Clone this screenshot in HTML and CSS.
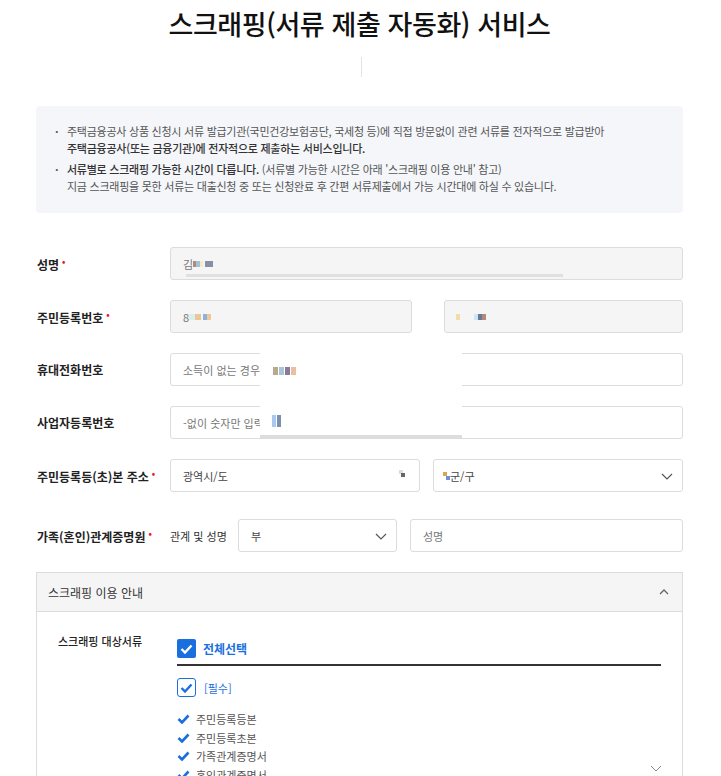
FILE: index.html
```html
<!DOCTYPE html>
<html lang="ko">
<head>
<meta charset="utf-8">
<title>스크래핑(서류 제출 자동화) 서비스</title>
<link rel="stylesheet" href="styles.css">
</head>
<body>
<div class="page">
  <h1 class="title">스크래핑(서류 제출 자동화) 서비스</h1>
  <div class="divider"></div>

  <div class="info">
    <ul class="info-list">
      <li>주택금융공사 상품 신청시 서류 발급기관(국민건강보험공단, 국세청 등)에 직접 방문없이 관련 서류를 전자적으로 발급받아<br><b>주택금융공사(또는 금융기관)에 전자적으로 제출하는 서비스입니다.</b></li>
      <li><b>서류별로 스크래핑 가능한 시간이 다릅니다.</b> (서류별 가능한 시간은 아래 '스크래핑 이용 안내' 참고)<br>지금 스크래핑을 못한 서류는 대출신청 중 또는 신청완료 후 간편 서류제출에서 가능 시간대에 하실 수 있습니다.</li>
    </ul>
  </div>

  <div class="form">
    <div class="row">
      <div class="label">성명<span class="req">•</span></div>
      <div class="field">
        <div class="input readonly">김<span class="px px-a"></span><span class="px px-b"></span></div>
      </div>
    </div>
    <div class="row">
      <div class="label">주민등록번호<span class="req">•</span></div>
      <div class="field two">
        <div class="input readonly rrn1">8<span class="px px-c"></span><span class="px px-d"></span></div>
        <div class="input readonly rrn2"><span class="px px-e"></span><span class="px px-f"></span></div>
      </div>
    </div>
    <div class="row">
      <div class="label">휴대전화번호</div>
      <div class="field">
        <div class="input placeholder">소득이 없는 경우 입력</div>
      </div>
    </div>
    <div class="row">
      <div class="label">사업자등록번호</div>
      <div class="field">
        <div class="input placeholder">-없이 숫자만 입력하세요</div>
      </div>
    </div>
    <div class="row">
      <div class="label">주민등록등(초)본 주소<span class="req">•</span></div>
      <div class="field two addr">
        <div class="input select">광역시/도<span class="px px-g"></span></div>
        <div class="input select"><span class="px px-h"></span>군/구
          <svg class="chev" width="12" height="7" viewBox="0 0 12 7"><polyline points="1,1 6,6 11,1" fill="none" stroke="#555" stroke-width="1.2"/></svg>
        </div>
      </div>
    </div>
    <div class="row row-family">
      <div class="label">가족(혼인)관계증명원<span class="req">•</span></div>
      <div class="field family">
        <span class="sublabel">관계 및 성명</span>
        <div class="input select rel">부
          <svg class="chev" width="12" height="7" viewBox="0 0 12 7"><polyline points="1,1 6,6 11,1" fill="none" stroke="#555" stroke-width="1.2"/></svg>
        </div>
        <div class="input placeholder fname">성명</div>
      </div>
    </div>

    <div class="mask mask-phone"></div>
    <div class="mask-blocks mb-phone"><span></span><span></span><span></span><span></span></div>
    <div class="mask-blocks mb-biz"><span></span><span></span></div>
  </div>

  <div class="accordion">
    <div class="acc-head">
      <span>스크래핑 이용 안내</span>
      <svg class="caret" width="10" height="6" viewBox="0 0 10 6"><polyline points="1,5 5,1 9,5" fill="none" stroke="#666" stroke-width="1.3"/></svg>
    </div>
    <div class="acc-body">
      <div class="acc-label">스크래핑 대상서류</div>
      <div class="docs">
        <div class="check-all">
          <span class="cb cb-filled"><svg width="13" height="10" viewBox="0 0 13 10"><polyline points="1.5,5 5,8.5 11.5,1.5" fill="none" stroke="#fff" stroke-width="2.4"/></svg></span>
          <span class="all-text">전체선택</span>
        </div>
        <div class="check-req">
          <span class="cb cb-outline"><svg width="13" height="10" viewBox="0 0 13 10"><polyline points="1.5,5 5,8.5 11.5,1.5" fill="none" stroke="#1a6fdf" stroke-width="2.4"/></svg></span>
          <span class="req-text">[필수]</span>
        </div>
        <ul class="doc-list">
          <li><svg width="13" height="10" viewBox="0 0 13 10"><polyline points="1.5,5 5,8.5 11.5,1.5" fill="none" stroke="#1a6fdf" stroke-width="2.6"/></svg>주민등록등본</li>
          <li><svg width="13" height="10" viewBox="0 0 13 10"><polyline points="1.5,5 5,8.5 11.5,1.5" fill="none" stroke="#1a6fdf" stroke-width="2.6"/></svg>주민등록초본</li>
          <li><svg width="13" height="10" viewBox="0 0 13 10"><polyline points="1.5,5 5,8.5 11.5,1.5" fill="none" stroke="#1a6fdf" stroke-width="2.6"/></svg>가족관계증명서</li>
          <li><svg width="13" height="10" viewBox="0 0 13 10"><polyline points="1.5,5 5,8.5 11.5,1.5" fill="none" stroke="#1a6fdf" stroke-width="2.6"/></svg>혼인관계증명서</li>
        </ul>
      </div>
      <svg class="more" width="12" height="7" viewBox="0 0 12 7"><polyline points="1,1 6,6 11,1" fill="none" stroke="#888" stroke-width="1"/></svg>
    </div>
  </div>
</div>
</body>
</html>
```

FILE: styles.css
```css
* { box-sizing: border-box; }
html, body { margin: 0; padding: 0; background: #fff; }
body {
  font-family: "Noto Sans CJK KR", "Noto Sans", sans-serif;
  color: #222;
  width: 721px;
  height: 776px;
  overflow: hidden;
}
.page { padding: 0 38px 0 36px; }

.title {
  margin: 0;
  padding-top: 4px;
  height: 44px;
  line-height: 40px;
  font-size: 27px;
  font-weight: 500;
  text-align: center;
  color: #111;
  letter-spacing: -0.4px;
}
.divider {
  width: 1px;
  height: 20px;
  background: #e3e3e3;
  margin: 13px 0 0 325px;
}

.info {
  margin-top: 29px;
  background: #f4f6fa;
  border-radius: 4px;
  padding: 17px 10px 18px 17px;
}
.info-list { margin: 0; padding: 0; list-style: none; }
.info-list li {
  position: relative;
  padding-left: 14px;
  font-size: 11px;
  line-height: 17px;
  color: #555;
  letter-spacing: -0.25px;
}
.info-list li + li { margin-top: 4px; }
.info-list li::before {
  content: "·";
  position: absolute;
  left: 2px;
  top: 0;
  color: #555;
  font-weight: 700;
}
.info-list b { font-weight: 500; color: #333; }

.form { position: relative; margin-top: 34px; }
.row { display: flex; align-items: center; height: 33px; }
.row + .row { margin-top: 20px; }
.row.row-family { margin-top: 27px; }
.label {
  width: 134px;
  flex: none;
  font-size: 12px;
  font-weight: 700;
  color: #222;
  padding-left: 1px;
  white-space: nowrap;
}
.req {
  color: #e8141c;
  font-size: 9px;
  vertical-align: 5px;
  margin-left: 3px;
}
.field { flex: 1; display: flex; align-items: center; height: 33px; }
.input {
  position: relative;
  height: 33px;
  border: 1px solid #dcdcdc;
  border-radius: 3px;
  background: #fff;
  font-size: 11px;
  color: #444;
  padding-left: 12px;
  display: flex;
  align-items: center;
  flex: 1;
}
.input.readonly { background: #f5f5f5; color: #777; }
.input.placeholder { color: #777; }
.two { gap: 32px; }
.rrn1 { flex: 0 0 242px; }
.addr { gap: 13px; }
.addr .input { flex: 1; }
.chev { position: absolute; right: 9px; top: 13px; }
.family { gap: 0; }
.sublabel { font-size: 11px; color: #333; width: 68px; flex: none; }
.rel { flex: 0 0 159px; margin-right: 13px; }

.px { display: inline-block; height: 6px; }
.px-a { width: 10px; background: linear-gradient(90deg, #b08a7a 0 30%, #a9bcd8 30% 70%, #f3eec0 70%); margin-left: 0; }
.px-b { width: 8px; background: #8a8fa8; margin-left: 2px; }
.px-c { width: 12px; background: linear-gradient(90deg, #d8f0e8 0 50%, #e9c79a 50%); }
.px-d { width: 8px; background: linear-gradient(90deg, #8ab4e0 0 50%, #f0c898 50%); margin-left: 2px; }
.px-e { width: 4px; background: #f2dcaa; margin-left: -1px; }
.px-f { width: 12px; background: linear-gradient(90deg, #c9e8f5 0 30%, #6b7890 30% 70%, #b08a7a 70%); margin-left: 14px; }
.px-g { position: absolute; right: 14px; top: 13px; width: 4px; height: 4px; background: #666; box-shadow: -2px -3px 0 #ddd; }
.px-h { width: 4px; height: 4px; background: #d9a455; margin: 0 3px 4px -3px; box-shadow: 3px 4px 0 #6f8fd0; }
.readonly::after {
  content: "";
  position: absolute;
  left: 15px;
  bottom: 2px;
  width: 377px;
  height: 3px;
  background: #e0e0e0;
}
.rrn1::after, .rrn2::after { display: none; }

.mask { position: absolute; background: #fff; }
.mask-phone { left: 224px; top: 104px; width: 202px; height: 87px; border-bottom: 3px solid #dddddd; }
.mask-blocks { position: absolute; display: flex; gap: 1px; }
.mask-blocks span { width: 5px; height: 8px; background: #c8c0d8; }
.mb-phone { left: 237px; top: 120px; }
.mb-phone span:nth-child(1) { background: #b9a98e; }
.mb-phone span:nth-child(2) { background: #a9c5d8; }
.mb-phone span:nth-child(3) { background: #8a7a98; }
.mb-phone span:nth-child(4) { background: #e8c0a0; }
.mb-biz { left: 236px; top: 168px; }
.mb-biz span { width: 4px; height: 12px; background: #7d8fb0; }
.mb-biz span:nth-child(1) { background: #a8c8f0; }

.accordion {
  margin-top: 20px;
  border: 1px solid #dcdcdc;
  border-bottom: none;
}
.acc-head {
  height: 39px;
  background: #f5f5f5;
  border-bottom: 1px solid #dcdcdc;
  display: flex;
  align-items: center;
  justify-content: space-between;
  padding: 0 13px 0 11px;
  font-size: 12px;
  color: #333;
}
.acc-body {
  position: relative;
  display: flex;
  padding: 19px 0 0 21px;
  height: 200px;
}
.acc-label {
  width: 119px;
  flex: none;
  font-size: 11px;
  color: #222;
  font-weight: 500;
  padding-top: 2px;
}
.docs { width: 484px; }
.check-all {
  display: flex;
  align-items: center;
  gap: 7px;
  height: 21px;
  padding-top: 7px;
  padding-bottom: 5px;
  border-bottom: 2px solid #333;
  box-sizing: content-box;
}
.cb {
  width: 19px;
  height: 19px;
  border-radius: 2px;
  display: flex;
  align-items: center;
  justify-content: center;
  flex: none;
}
.cb-filled { background: #1a6fdf; }
.cb-outline { border: 1.5px solid #1a6fdf; border-radius: 3px; }
.all-text { font-size: 12px; font-weight: 700; color: #1a6fdf; }
.check-req { display: flex; align-items: center; gap: 8px; margin-top: 12px; }
.req-text { font-size: 11px; color: #1a6fdf; }
.doc-list { list-style: none; margin: 13px 0 0; padding: 0; }
.doc-list li {
  display: flex;
  align-items: center;
  gap: 6px;
  font-size: 11px;
  line-height: 18.5px;
  color: #555;
}
.more { position: absolute; left: 613px; top: 153px; }
```
